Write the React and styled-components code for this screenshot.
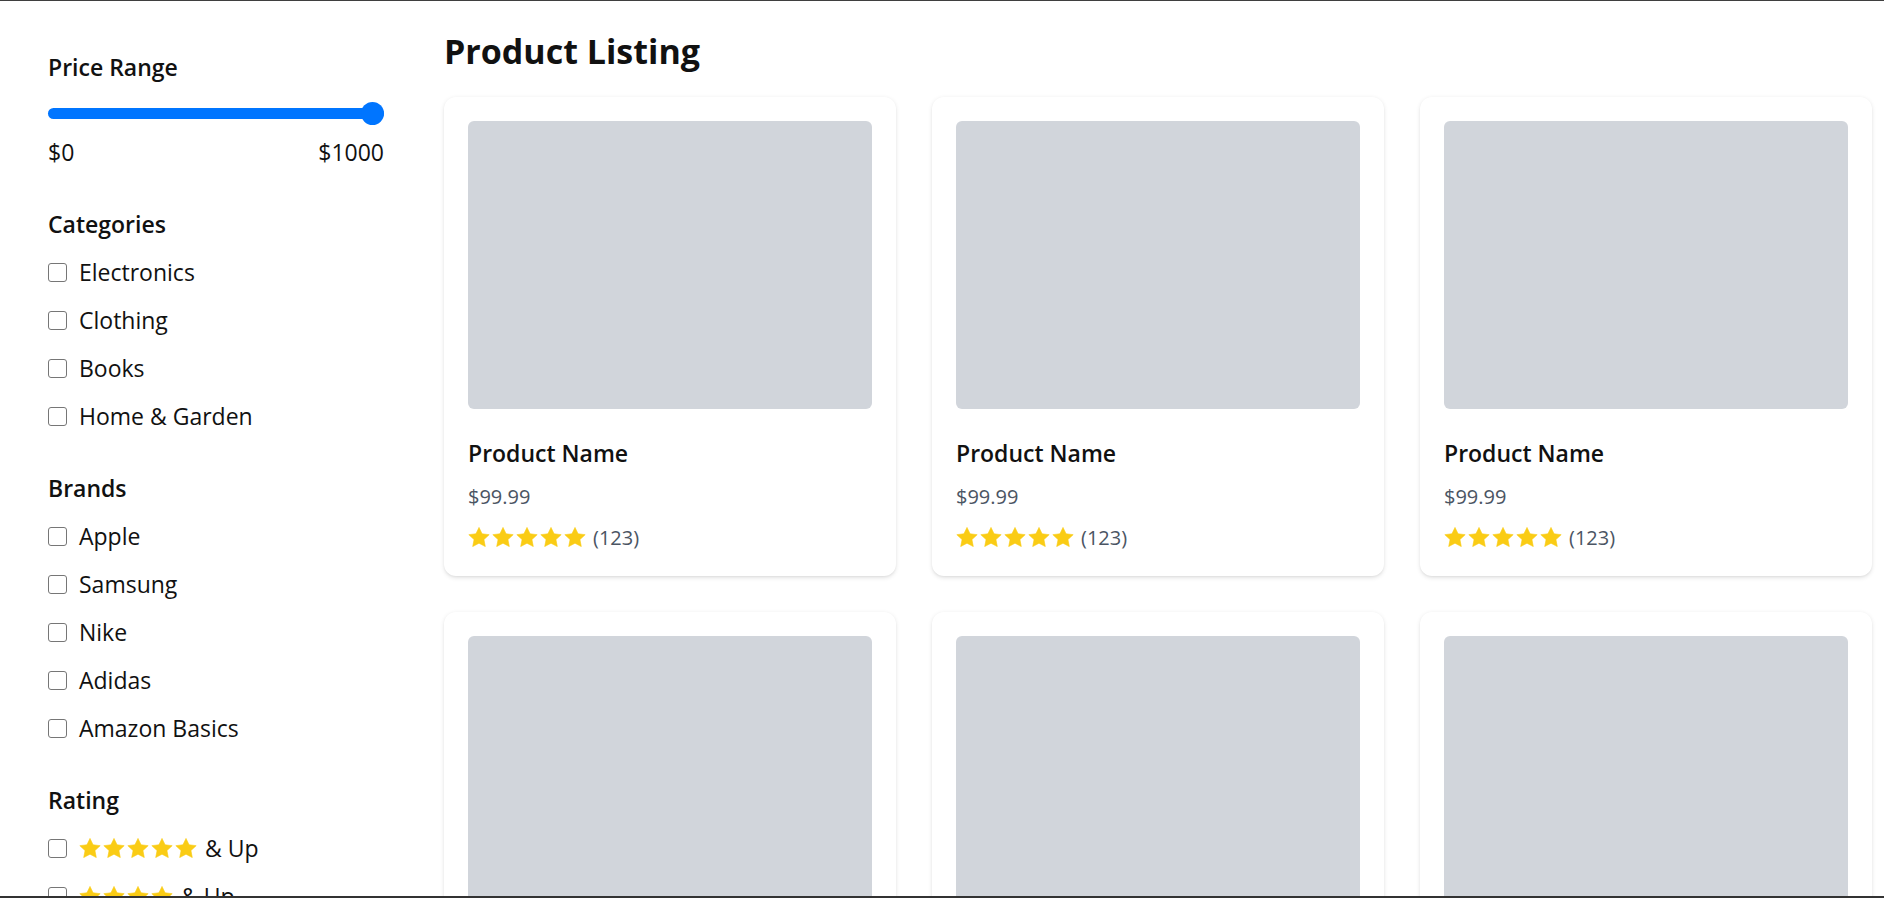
import React from 'react'
import styled, { createGlobalStyle } from 'styled-components'

const GlobalStyle = createGlobalStyle`
  html {
    overflow: hidden;
  }
  body {
    margin: 0;
    border-top: 1px solid #3f3f3f;
    background: #ffffff;
    color: #111111;
    font-family: "Segoe UI", "Open Sans", "Noto Sans", sans-serif;
  }
  * {
    box-sizing: border-box;
  }
`

const BottomEdge = styled.div`
  position: fixed;
  left: 0;
  right: 0;
  bottom: 0;
  height: 2px;
  background: #333333;
`

const Page = styled.div`
  display: flex;
  align-items: flex-start;
`

const Sidebar = styled.aside`
  width: 432px;
  flex-shrink: 0;
  padding: 48px;
`

// flex column so the last row's margin doesn't collapse into the section's
const Section = styled.section`
  display: flex;
  flex-direction: column;
  margin-bottom: ${props => props.$space || 24}px;
`

const SectionTitle = styled.h3`
  margin: 0 0 12px;
  font-size: 23px;
  line-height: 36px;
  font-weight: 600;
`

const Range = styled.input`
  display: block;
  width: 336px;
  height: 24px;
  margin: 4px 0 0;
  background: transparent;
  -webkit-appearance: none;
  appearance: none;

  &::-webkit-slider-runnable-track {
    height: 11px;
    border-radius: 6px;
    background: #0075ff;
  }

  &::-webkit-slider-thumb {
    -webkit-appearance: none;
    appearance: none;
    width: 23px;
    height: 23px;
    margin-top: -6px;
    border-radius: 50%;
    background: #0075ff;
  }
`

const RangeLabels = styled.div`
  display: flex;
  justify-content: space-between;
  margin-top: 9px;
  font-size: 23px;
  line-height: 36px;
`

const CheckRow = styled.label`
  display: flex;
  align-items: center;
  gap: 12px;
  height: 36px;
  margin-bottom: 12px;
  font-size: 23px;
`

const Checkbox = styled.input`
  -webkit-appearance: none;
  appearance: none;
  width: 19px;
  height: 19px;
  margin: 0;
  flex-shrink: 0;
  border: 1.5px solid #767676;
  border-radius: 3px;
  background: #ffffff;
`

const Stars = styled.span`
  display: inline-flex;
  gap: 2px;
  margin-right: ${props => props.$after}px;
`

const StarIcon = styled.svg`
  width: 22px;
  height: 20px;
  display: block;
  fill: #facc15;
  stroke: #facc15;
  stroke-width: 0.6;
  stroke-linejoin: round;
`

const UpText = styled.span`
  margin-left: -12px;
`

const Main = styled.main`
  flex: 1;
  padding: 26px 12px 24px;
`

const Title = styled.h1`
  margin: 0 0 22px;
  font-size: 34px;
  line-height: 48px;
  font-weight: 700;
`

const Grid = styled.div`
  display: grid;
  grid-template-columns: repeat(3, 1fr);
  gap: 36px;
`

const Card = styled.div`
  padding: 24px;
  border-radius: 12px;
  background: #ffffff;
  box-shadow: 0 1.5px 4.5px rgba(0, 0, 0, 0.1), 0 1.5px 3px -1.5px rgba(0, 0, 0, 0.1);
`

const Thumb = styled.div`
  height: 288px;
  border-radius: 6px;
  background: #d1d5db;
`

const ProductName = styled.h2`
  margin: 23px 0 0;
  font-size: 23px;
  line-height: 42px;
  font-weight: 600;
`

const Price = styled.p`
  margin: 8px 0 0;
  font-size: 20px;
  line-height: 30px;
  color: #4b5563;
`

const RatingLine = styled.div`
  display: flex;
  align-items: center;
  height: 30px;
  margin-top: 10px;
  font-size: 20px;
  color: #4b5563;
`

const Star = () => (
  <StarIcon viewBox="0 0 22 20">
    <path d="M11 0.4L14.06 6.79L21.2 7.65L15.95 12.61L17.3 19.6L11 16.2L4.7 19.6L6.05 12.61L0.8 7.65L7.94 6.79Z" />
  </StarIcon>
)

const StarRow = ({ count, after }) => (
  <Stars $after={after}>
    {Array.from({ length: count }).map((_, i) => <Star key={i} />)}
  </Stars>
)

const categories = ['Electronics', 'Clothing', 'Books', 'Home & Garden']
const brands = ['Apple', 'Samsung', 'Nike', 'Adidas', 'Amazon Basics']
const ratings = [5, 4, 3, 2, 1]
const products = Array.from({ length: 9 }).map((_, i) => ({
  id: i,
  name: 'Product Name',
  price: '$99.99',
  reviews: 123
}))

export default function App() {
  return (
    <>
      <GlobalStyle />
      <Page>
        <Sidebar>
          <Section $space={36}>
            <SectionTitle>Price Range</SectionTitle>
            <Range type="range" min="0" max="1000" defaultValue="1000" />
            <RangeLabels>
              <span>$0</span>
              <span>$1000</span>
            </RangeLabels>
          </Section>

          <Section>
            <SectionTitle>Categories</SectionTitle>
            {categories.map(c => (
              <CheckRow key={c}>
                <Checkbox type="checkbox" />
                {c}
              </CheckRow>
            ))}
          </Section>

          <Section>
            <SectionTitle>Brands</SectionTitle>
            {brands.map(b => (
              <CheckRow key={b}>
                <Checkbox type="checkbox" />
                {b}
              </CheckRow>
            ))}
          </Section>

          <Section>
            <SectionTitle>Rating</SectionTitle>
            {ratings.map(r => (
              <CheckRow key={r}>
                <Checkbox type="checkbox" />
                <StarRow count={r} after={8} />
                <UpText>&amp; Up</UpText>
              </CheckRow>
            ))}
          </Section>
        </Sidebar>

        <Main>
          <Title>Product Listing</Title>
          <Grid>
            {products.map(p => (
              <Card key={p.id}>
                <Thumb />
                <ProductName>{p.name}</ProductName>
                <Price>{p.price}</Price>
                <RatingLine>
                  <StarRow count={5} after={7} />
                  ({p.reviews})
                </RatingLine>
              </Card>
            ))}
          </Grid>
        </Main>
      </Page>
      <BottomEdge />
    </>
  )
}
